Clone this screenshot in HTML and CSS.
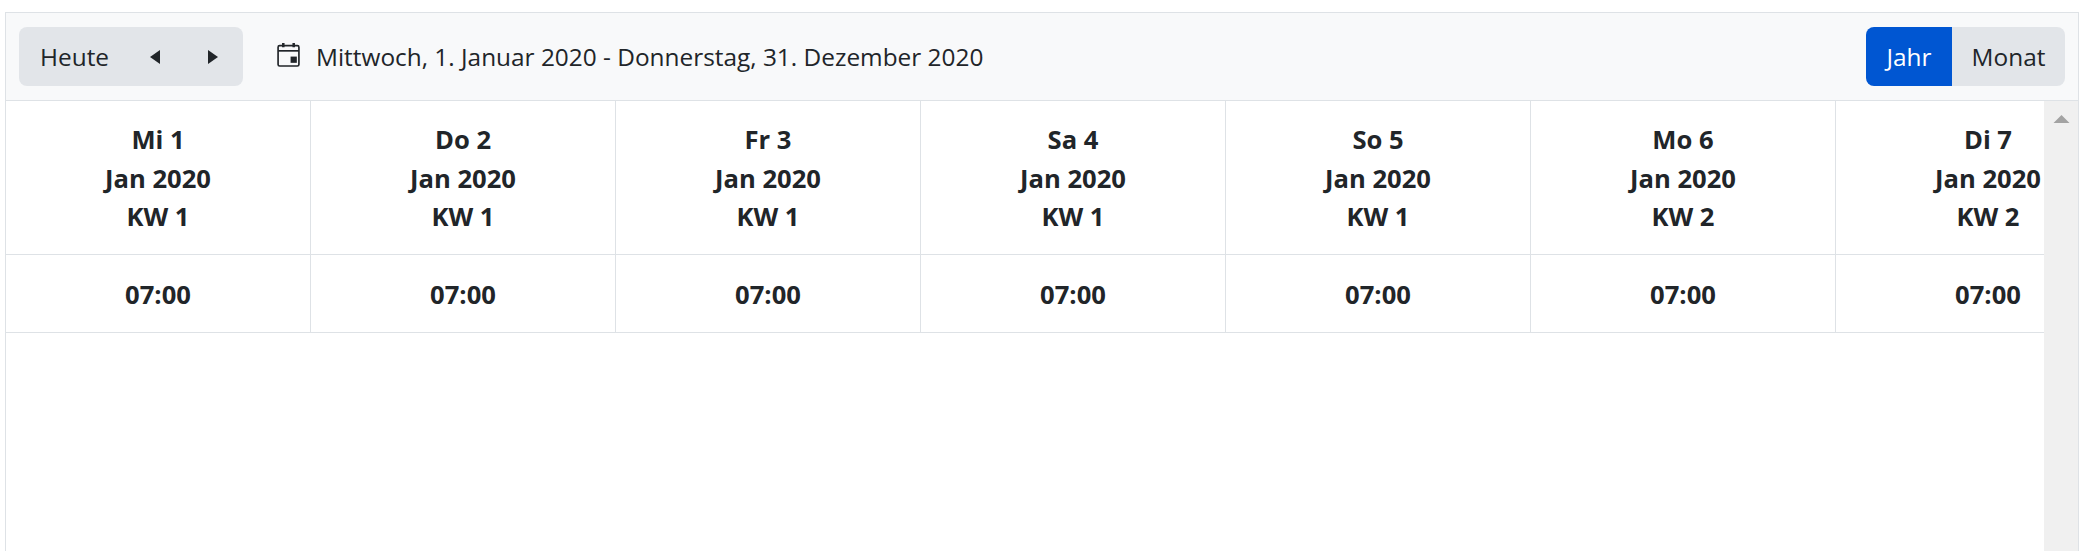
FILE: index.html
```html
<!DOCTYPE html>
<html lang="de">
<head>
<meta charset="utf-8">
<title>Kalender</title>
<link rel="stylesheet" href="styles.css">
</head>
<body>
<div class="scheduler">
  <div class="toolbar">
    <div class="btn-group nav-group">
      <span class="today">Heute</span>
      <svg class="caret caret-left" viewBox="0 0 10 14"><polygon points="10,0 10,14 0,7"/></svg>
      <svg class="caret caret-right" viewBox="0 0 10 14"><polygon points="0,0 0,14 10,7"/></svg>
    </div>
    <div class="range">
      <svg class="cal" viewBox="0 0 22 24" fill="none" stroke="#212529">
        <rect x="1" y="3.5" width="20" height="19.5" rx="1.5" stroke-width="1.6"/>
        <path d="M1 8.5H21" stroke-width="1.6"/>
        <path d="M6 1V5M16 1V5" stroke-width="2.4"/>
        <rect x="13" y="14" width="6" height="6" fill="#212529" stroke="none"/>
      </svg>
      <span>Mittwoch, 1. Januar 2020 - Donnerstag, 31. Dezember 2020</span>
    </div>
    <div class="view-switch">
      <span class="view active">Jahr</span>
      <span class="view">Monat</span>
    </div>
  </div>
  <div class="body">
    <div class="grid-area">
      <div class="row head-row">
        <div class="cell">Mi 1<br>Jan 2020<br>KW 1</div>
        <div class="cell">Do 2<br>Jan 2020<br>KW 1</div>
        <div class="cell">Fr 3<br>Jan 2020<br>KW 1</div>
        <div class="cell">Sa 4<br>Jan 2020<br>KW 1</div>
        <div class="cell">So 5<br>Jan 2020<br>KW 1</div>
        <div class="cell">Mo 6<br>Jan 2020<br>KW 2</div>
        <div class="cell">Di 7<br>Jan 2020<br>KW 2</div>
      </div>
      <div class="row time-row">
        <div class="cell">07:00</div>
        <div class="cell">07:00</div>
        <div class="cell">07:00</div>
        <div class="cell">07:00</div>
        <div class="cell">07:00</div>
        <div class="cell">07:00</div>
        <div class="cell">07:00</div>
      </div>
    </div>
    <div class="scrollbar">
      <svg class="scroll-up" viewBox="0 0 16 8"><polygon points="8,0 16,8 0,8"/></svg>
    </div>
  </div>
</div>
</body>
</html>
```

FILE: styles.css
```css
html, body {
  margin: 0;
  height: 551px;
  overflow: hidden;
  background: #fff;
}
body {
  padding: 12px 10px 0 5px;
  box-sizing: border-box;
  font-family: "Open Sans", "Noto Sans", sans-serif;
  color: #212529;
}
.scheduler {
  height: 560px;
  border: 1px solid #dee2e6;
  border-bottom: 0;
  display: flex;
  flex-direction: column;
}
.toolbar {
  height: 88px;
  flex: none;
  box-sizing: border-box;
  background: #f8f9fa;
  border-bottom: 1px solid #dee2e6;
  display: flex;
  align-items: center;
  padding: 0 13px 0 13px;
  font-size: 24.4px;
}
.btn-group {
  display: flex;
}
.nav-group {
  width: 224px;
  height: 59px;
  box-sizing: border-box;
  background: #e2e5e9;
  border-radius: 8px;
  align-items: center;
  padding-left: 21px;
}
.today {
  width: 110px;
}
.caret {
  width: 10px;
  height: 14px;
  fill: #212529;
}
.caret-right {
  margin-left: 48px;
}
.range {
  margin-left: 34px;
  display: flex;
  align-items: center;
  gap: 16px;
  flex: 1;
}
.cal {
  width: 23px;
  height: 25px;
  margin-top: -4px;
}
.view-switch {
  display: flex;
  height: 59px;
  border-radius: 8px;
  overflow: hidden;
}
.view {
  display: flex;
  align-items: center;
  justify-content: center;
  background: #e2e5e9;
  width: 113px;
}
.view.active {
  width: 86px;
  background: #0056d2;
  color: #fff;
}
.body {
  flex: 1;
  display: flex;
  min-height: 0;
}
.grid-area {
  flex: 1;
  min-width: 0;
  overflow: hidden;
}
.row {
  display: grid;
  grid-template-columns: repeat(7, 305px);
  border-bottom: 1px solid #dee2e6;
  box-sizing: border-box;
  text-align: center;
  font-weight: 700;
  font-size: 25.6px;
  line-height: 38.7px;
}
.cell {
  border-right: 1px solid #dee2e6;
  box-sizing: border-box;
}
.head-row {
  height: 154px;
}
.head-row .cell {
  padding-top: 20px;
}
.time-row {
  height: 78px;
}
.time-row .cell {
  padding-top: 21px;
}
.scrollbar {
  width: 34px;
  flex: none;
  background: #f0f0f0;
}
.scroll-up {
  display: block;
  width: 17px;
  height: 8px;
  margin: 14px 0 0 9px;
  fill: #a3a3a3;
}
```
